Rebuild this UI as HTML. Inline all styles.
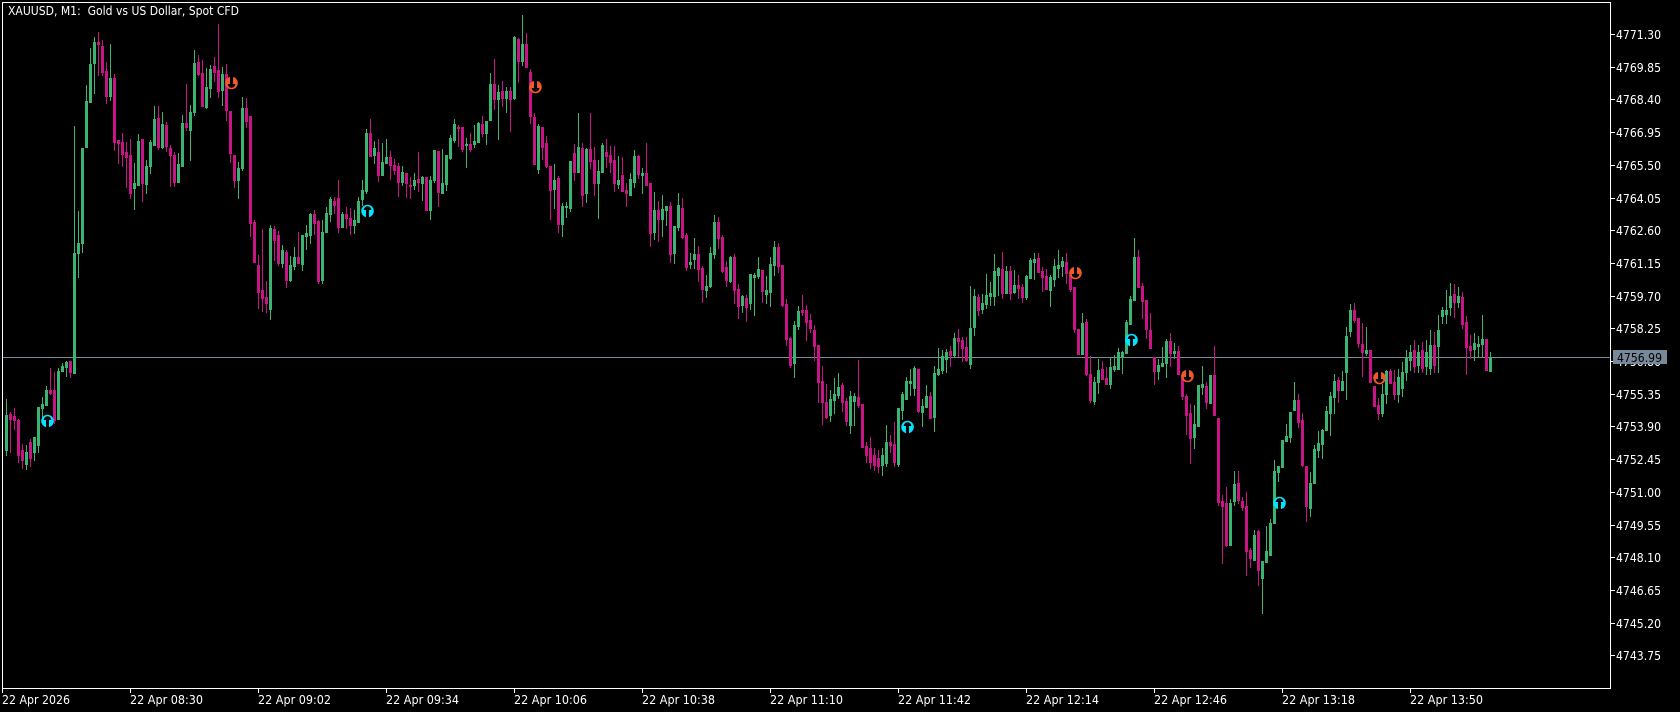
<!DOCTYPE html>
<html lang="en"><head><meta charset="utf-8"><title>XAUUSD, M1</title>
<style>
html,body{margin:0;padding:0;background:#000;width:1680px;height:712px;overflow:hidden}
svg{position:absolute;left:0;top:0;display:block}
text{font-family:"DejaVu Sans","Liberation Sans",sans-serif;font-size:12px;fill:#fff}
</style></head><body>
<svg id="c" width="1680" height="712" viewBox="0 0 1680 712" xmlns="http://www.w3.org/2000/svg">
<rect width="1680" height="712" fill="#000"/>
<rect x="3" y="357" width="1607" height="1" fill="#778899"/>
<path id="g" fill="#3CB371" shape-rendering="crispEdges" d=""/>
<path id="m" fill="#C71585" shape-rendering="crispEdges" d=""/>
<g id="a"></g>
<g fill="#fff" shape-rendering="crispEdges">
<rect x="2" y="2" width="1609" height="1"/><rect x="2" y="688" width="1609" height="1"/>
<rect x="2" y="2" width="1" height="687"/><rect x="1610" y="2" width="1" height="687"/>
<path d="M1611 34h4v1h-4zM1611 67h4v1h-4zM1611 99h4v1h-4zM1611 132h4v1h-4zM1611 165h4v1h-4zM1611 198h4v1h-4zM1611 230h4v1h-4zM1611 263h4v1h-4zM1611 296h4v1h-4zM1611 328h4v1h-4zM1611 361h4v1h-4zM1611 394h4v1h-4zM1611 426h4v1h-4zM1611 459h4v1h-4zM1611 492h4v1h-4zM1611 525h4v1h-4zM1611 557h4v1h-4zM1611 590h4v1h-4zM1611 623h4v1h-4zM1611 655h4v1h-4z"/>
<path d="M2 689h1v4h-1zM130 689h1v4h-1zM258 689h1v4h-1zM386 689h1v4h-1zM514 689h1v4h-1zM642 689h1v4h-1zM770 689h1v4h-1zM898 689h1v4h-1zM1026 689h1v4h-1zM1154 689h1v4h-1zM1282 689h1v4h-1zM1410 689h1v4h-1z"/>
</g>
<text x="8" y="15" xml:space="preserve" textLength="231" lengthAdjust="spacingAndGlyphs">XAUUSD, M1:  Gold vs US Dollar, Spot CFD</text>
<g>
<text x="1616" y="39" textLength="45" lengthAdjust="spacingAndGlyphs">4771.30</text>
<text x="1616" y="72" textLength="45" lengthAdjust="spacingAndGlyphs">4769.85</text>
<text x="1616" y="104" textLength="45" lengthAdjust="spacingAndGlyphs">4768.40</text>
<text x="1616" y="137" textLength="45" lengthAdjust="spacingAndGlyphs">4766.95</text>
<text x="1616" y="170" textLength="45" lengthAdjust="spacingAndGlyphs">4765.50</text>
<text x="1616" y="203" textLength="45" lengthAdjust="spacingAndGlyphs">4764.05</text>
<text x="1616" y="235" textLength="45" lengthAdjust="spacingAndGlyphs">4762.60</text>
<text x="1616" y="268" textLength="45" lengthAdjust="spacingAndGlyphs">4761.15</text>
<text x="1616" y="301" textLength="45" lengthAdjust="spacingAndGlyphs">4759.70</text>
<text x="1616" y="333" textLength="45" lengthAdjust="spacingAndGlyphs">4758.25</text>
<text x="1616" y="366" textLength="45" lengthAdjust="spacingAndGlyphs">4756.80</text>
<text x="1616" y="399" textLength="45" lengthAdjust="spacingAndGlyphs">4755.35</text>
<text x="1616" y="431" textLength="45" lengthAdjust="spacingAndGlyphs">4753.90</text>
<text x="1616" y="464" textLength="45" lengthAdjust="spacingAndGlyphs">4752.45</text>
<text x="1616" y="497" textLength="45" lengthAdjust="spacingAndGlyphs">4751.00</text>
<text x="1616" y="530" textLength="45" lengthAdjust="spacingAndGlyphs">4749.55</text>
<text x="1616" y="562" textLength="45" lengthAdjust="spacingAndGlyphs">4748.10</text>
<text x="1616" y="595" textLength="45" lengthAdjust="spacingAndGlyphs">4746.65</text>
<text x="1616" y="628" textLength="45" lengthAdjust="spacingAndGlyphs">4745.20</text>
<text x="1616" y="660" textLength="45" lengthAdjust="spacingAndGlyphs">4743.75</text>
</g>
<rect x="1613" y="350" width="54" height="14" fill="#778899"/>
<text x="1617" y="362" textLength="45" lengthAdjust="spacingAndGlyphs" style="fill:#000">4756.99</text>
<g>
<text x="2" y="704" textLength="68" lengthAdjust="spacingAndGlyphs">22 Apr 2026</text>
<text x="130" y="704" textLength="73" lengthAdjust="spacingAndGlyphs">22 Apr 08:30</text>
<text x="258" y="704" textLength="73" lengthAdjust="spacingAndGlyphs">22 Apr 09:02</text>
<text x="386" y="704" textLength="73" lengthAdjust="spacingAndGlyphs">22 Apr 09:34</text>
<text x="514" y="704" textLength="73" lengthAdjust="spacingAndGlyphs">22 Apr 10:06</text>
<text x="642" y="704" textLength="73" lengthAdjust="spacingAndGlyphs">22 Apr 10:38</text>
<text x="770" y="704" textLength="73" lengthAdjust="spacingAndGlyphs">22 Apr 11:10</text>
<text x="898" y="704" textLength="73" lengthAdjust="spacingAndGlyphs">22 Apr 11:42</text>
<text x="1026" y="704" textLength="73" lengthAdjust="spacingAndGlyphs">22 Apr 12:14</text>
<text x="1154" y="704" textLength="73" lengthAdjust="spacingAndGlyphs">22 Apr 12:46</text>
<text x="1282" y="704" textLength="73" lengthAdjust="spacingAndGlyphs">22 Apr 13:18</text>
<text x="1410" y="704" textLength="73" lengthAdjust="spacingAndGlyphs">22 Apr 13:50</text>
</g>
</svg>
<script>
var D="g 399 415 450 455,m 412 414 419 452,m 408 416 420 429,m 419 420 455 462,m 444 450 460 468,g 445 452 464 469,m 439 442 458 466,g 437 437 452 460,g 407 407 445 452,g 397 404 408 420,g 386 390 405 405,m 368 390 393 394,m 372 390 420 423,g 368 371 419 419,g 363 366 371 371,g 361 362 367 376,m 361 361 372 377,g 126 253 373 373,g 211 243 253 277,g 148 148 243 252,g 85 101 147 147,g 48 64 102 102,g 37 42 63 93,m 32 42 44 75,m 40 46 72 75,m 62 71 96 103,g 44 78 96 100,m 74 78 142 150,m 140 140 143 163,m 133 142 154 166,m 142 152 157 187,m 139 155 193 198,g 163 183 188 209,g 134 141 185 185,m 139 139 183 201,g 160 166 184 193,g 140 142 166 173,g 106 119 145 145,m 106 118 147 149,g 112 124 147 148,m 122 125 146 151,m 145 148 155 186,m 152 155 182 186,g 153 164 182 182,g 115 123 166 166,m 84 123 127 130,g 105 112 130 160,g 50 63 112 115,m 55 62 74 75,m 60 73 106 106,g 68 87 107 108,g 65 69 88 97,m 57 66 72 81,m 24 70 91 97,g 67 74 90 105,m 64 74 110 120,m 111 111 153 162,m 155 155 180 187,g 162 168 180 198,g 97 108 168 170,m 98 108 121 127,m 116 116 223 236,m 220 222 262 262,m 255 265 292 308,m 229 290 298 311,m 281 297 303 312,g 225 228 309 319,m 226 229 240 260,m 231 235 263 265,g 245 250 263 267,m 250 252 280 287,g 256 265 280 281,g 247 257 266 269,m 232 257 263 263,g 235 235 264 270,g 225 233 236 249,g 213 214 235 243,m 210 214 223 234,m 220 221 281 283,g 220 232 280 283,g 207 213 232 232,g 197 199 214 221,m 197 201 205 213,m 180 198 227 232,g 212 214 227 227,m 207 214 218 228,m 208 218 225 234,g 210 220 225 233,g 197 201 222 222,g 180 190 199 205,g 129 133 191 193,m 119 133 156 156,g 141 148 155 163,m 139 152 175 181,g 143 162 175 175,g 139 157 163 163,m 151 157 165 179,m 159 165 170 174,m 163 166 182 196,g 166 172 182 185,m 173 173 183 197,m 177 185 186 198,g 173 180 185 189,m 152 179 182 191,g 176 177 183 200,m 177 177 210 210,g 176 180 210 219,g 150 150 180 182,m 151 151 192 206,g 149 183 193 193,g 155 155 184 190,g 135 138 158 159,g 119 124 140 142,m 125 127 128 146,m 127 127 149 151,g 138 144 145 167,m 133 144 149 151,g 125 141 144 147,g 122 123 142 142,m 116 124 133 136,g 121 121 133 144,g 73 84 120 120,m 59 84 99 109,g 85 92 99 139,m 81 91 98 106,g 87 91 98 112,m 87 91 99 131,g 36 37 98 99,m 38 39 61 82,g 15 44 61 65,m 33 44 67 67,m 69 72 116 123,m 113 117 164 164,g 124 126 169 173,m 127 127 147 159,m 136 143 166 167,m 166 166 190 219,g 164 180 189 208,m 176 178 224 232,g 203 206 224 236,g 202 206 207 217,g 161 161 208 211,m 144 153 172 180,g 113 147 172 172,m 143 148 195 206,g 148 149 193 202,m 113 149 161 168,m 147 160 183 195,g 160 171 183 218,g 143 145 172 172,m 139 152 156 167,m 146 155 162 172,m 146 160 183 191,g 156 180 184 188,m 157 175 191 191,m 183 190 193 206,g 173 179 195 195,g 150 156 182 187,m 155 156 174 178,g 168 173 175 193,m 143 173 185 185,m 183 183 233 246,g 192 210 232 239,m 201 210 219 241,g 195 209 219 236,g 206 206 210 225,m 202 206 254 262,g 226 226 253 263,g 193 205 227 230,m 198 208 237 238,m 233 235 267 270,g 253 262 264 268,g 238 254 259 268,m 246 254 269 281,m 266 268 289 302,g 275 286 290 297,g 247 253 286 287,g 215 222 254 258,m 217 222 238 248,m 235 237 271 272,m 261 267 280 286,g 256 257 281 282,m 254 257 290 303,m 284 289 306 318,g 295 296 305 312,m 295 298 307 321,g 274 274 303 309,g 273 275 277 315,g 257 269 276 278,m 270 270 291 302,g 276 290 294 303,g 257 264 292 306,g 241 247 265 275,m 243 247 266 272,m 265 265 305 306,m 299 304 339 345,m 337 338 365 367,g 321 325 363 377,g 306 311 326 329,m 295 310 312 315,m 305 310 322 340,m 314 320 328 332,m 325 330 346 360,m 345 345 382 402,m 366 381 402 424,m 384 402 417 418,g 390 399 415 421,g 378 394 400 413,g 373 387 395 398,m 383 385 402 411,m 398 401 421 425,g 391 396 425 433,g 393 396 401 425,m 360 397 405 407,m 404 404 447 447,m 442 446 455 462,m 437 448 462 468,m 448 455 465 470,m 450 458 466 472,g 448 455 465 475,g 425 442 463 466,m 435 442 445 452,m 422 444 462 466,g 408 408 464 466,g 392 394 410 419,g 377 381 399 399,g 369 381 383 395,g 366 368 388 395,m 369 369 411 412,g 399 406 412 426,g 385 396 407 407,m 392 396 418 418,g 366 373 417 431,g 348 369 374 375,g 350 356 370 373,g 349 352 359 372,m 346 351 355 366,g 333 338 355 357,m 329 338 341 356,m 337 340 348 361,m 337 347 360 361,g 286 328 364 368,g 289 296 327 335,m 294 297 310 315,g 294 303 309 313,g 274 295 304 308,g 282 293 296 305,g 254 271 296 305,g 267 268 275 295,m 252 269 293 298,g 266 271 293 293,m 266 271 293 299,g 270 285 292 293,m 275 285 288 298,m 284 287 297 302,g 275 276 297 299,g 258 260 278 278,g 253 259 262 279,m 253 258 272 272,m 267 271 277 291,m 269 276 289 289,g 275 277 290 306,g 259 266 279 286,g 250 265 268 277,g 257 261 266 276,m 253 262 273 283,m 275 275 289 291,m 287 287 329 332,m 329 329 354 354,g 313 323 354 354,m 319 322 374 375,m 356 374 400 402,g 377 382 401 404,g 359 370 382 393,m 361 369 379 379,m 367 378 384 384,g 358 367 384 388,g 355 366 369 371,g 348 352 369 369,g 351 352 357 373,g 320 322 353 353,g 296 299 324 324,g 238 257 300 300,m 250 257 287 287,m 283 286 301 318,m 300 300 329 338,m 313 330 348 348,m 357 357 371 384,g 359 365 371 379,g 347 363 366 366,g 339 341 363 377,m 333 341 353 366,g 343 351 353 358,m 346 351 374 374,m 375 375 396 399,m 394 396 415 434,m 404 413 438 463,g 405 424 437 448,g 385 385 426 426,g 366 384 387 394,m 382 386 402 408,g 375 375 403 403,m 346 375 415 415,m 418 418 502 505,m 495 501 506 563,m 487 503 545 546,g 499 503 545 545,g 471 484 501 505,m 471 483 500 503,m 497 501 507 510,m 492 506 551 575,m 548 550 558 567,g 530 535 560 560,m 530 531 570 585,g 561 561 578 613,g 526 551 562 562,g 519 523 555 555,g 460 471 523 523,g 466 466 472 481,g 440 440 467 467,g 424 436 441 441,g 412 412 437 442,g 382 400 410 410,m 394 400 422 427,m 413 420 465 466,m 466 466 506 521,g 472 483 508 516,g 445 449 483 483,g 431 443 450 457,g 429 430 444 458,g 406 411 430 430,g 392 396 413 435,g 374 381 397 413,m 377 380 390 402,g 371 381 390 390,g 327 336 372 399,g 304 310 331 336,m 303 310 320 322,m 318 318 343 347,m 323 344 352 376,g 327 350 353 355,m 350 350 382 382,m 386 386 406 406,m 398 405 413 419,g 384 394 413 416,g 370 371 394 403,m 369 371 383 383,m 370 382 394 399,g 369 377 394 402,g 362 372 388 396,g 350 358 372 380,g 345 352 360 370,m 340 350 366 372,g 345 352 365 372,m 342 350 368 372,g 340 352 366 374,g 330 345 368 374,m 332 345 365 372,g 315 330 346 372,g 307 310 316 323,g 290 310 314 323,g 283 296 307 315,m 284 294 302 317,g 287 296 302 307,m 292 297 324 328,m 316 322 347 374,m 335 346 350 358,g 333 343 349 360,g 336 344 346 356,g 315 339 344 356,m 339 339 370 370,g 352 357 371 371";
var P={g:"",m:""};
D.split(",").forEach(function(r,i){var p=r.split(" "),x=6+4*i,H=+p[1],T=+p[2],B=+p[3],L=+p[4];
P[p[0]]+="M"+x+" "+H+"h1V"+(L+1)+"h-1zM"+(x-1)+" "+T+"h3V"+(B+1)+"h-3z";});
document.getElementById("g").setAttribute("d",P.g);
document.getElementById("m").setAttribute("d",P.m);
var s="";
function A(x,y,c,up){
 var d=up?1:-1, sw=up?1:0;
 var path="M"+(x-3.8)+" "+(y-d)+"A3.8 3.8 0 0 "+sw+" "+(x+3.8)+" "+(y-d)+"H"+(x+1.5)+"V"+(y+d*7)+"H"+(x-1.5)+"V"+(y-d)+"Z";
 s+='<circle cx="'+x+'" cy="'+y+'" r="6.3" fill="'+c+'"/><path d="'+path+'" fill="#000"/>';
}
[[47.5,421],[367.5,211],[907.5,427],[1131.5,340],[1279.5,503]].forEach(function(a){A(a[0],a[1],"#00E5FF",1)});
[[231.5,83],[535.5,87],[1075.5,273],[1187.5,376],[1379.5,378]].forEach(function(a){A(a[0],a[1],"#F2582A",0)});
document.getElementById("a").innerHTML=s;
</script>
</body></html>
